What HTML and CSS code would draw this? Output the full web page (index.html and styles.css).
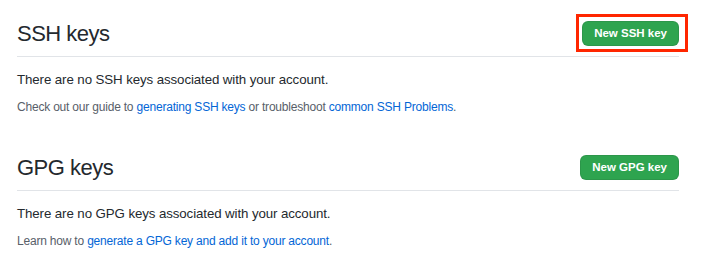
FILE: index.html
```
<!DOCTYPE html>
<html lang="en">
<head>
    <meta charset="UTF-8">
    <meta name="viewport" content="width=device-width, initial-scale=1.0">
    <title>SSH and GPG keys</title>
    <link rel="stylesheet" href="styles.css">
</head>
<body>

    <main class="settings">
        <!-- SSH keys -->
        <section class="key-section">
            <div class="section-head">
                <h2>SSH keys</h2>
                <a href="#" class="btn btn-new highlighted">New SSH key</a>
            </div>
            <p class="empty">There are no SSH keys associated with your account.</p>
            <p class="note">Check out our guide to <a href="#">generating SSH keys</a> or troubleshoot <a href="#">common SSH Problems</a>.</p>
        </section>

        <!-- GPG keys -->
        <section class="key-section">
            <div class="section-head">
                <h2>GPG keys</h2>
                <a href="#" class="btn btn-new">New GPG key</a>
            </div>
            <p class="empty">There are no GPG keys associated with your account.</p>
            <p class="note">Learn how to <a href="#">generate a GPG key and add it to your account</a>.</p>
        </section>
    </main>

</body>
</html>
```

FILE: styles.css
```
body {
    font-family: "Liberation Sans", Arial, sans-serif;
    margin: 0;
    padding: 0;
    background: #ffffff;
    color: #24292e;
}

.settings {
    width: 662px;
    padding: 16px 0 0 17px;
}

.key-section {
    margin-bottom: 34px;
}

.key-section:last-child {
    margin-bottom: 0;
}

/* Heading row */
.section-head {
    display: flex;
    justify-content: space-between;
    align-items: center;
    padding-bottom: 5px;
    border-bottom: 1px solid #e1e4e8;
}

.section-head h2 {
    margin: 0;
    font-size: 22px;
    font-weight: 400;
    line-height: 35px;
    letter-spacing: -0.5px;
}

/* Button */
.btn {
    position: relative;
    display: inline-block;
    font-size: 11.5px;
    font-weight: bold;
    line-height: 23px;
    padding: 0 11px;
    border-radius: 6px;
    text-decoration: none;
}

.btn-new {
    background: #2ea44f;
    color: #ffffff;
    border: 1px solid rgba(27, 31, 35, 0.1);
}

/* red annotation box round the button */
.highlighted::after {
    content: "";
    position: absolute;
    top: -8px;
    left: -7px;
    right: -10px;
    bottom: -7px;
    border: 3px solid #ff2600;
}

/* Texts */
.empty {
    margin: 12px 0 0;
    font-size: 13.3px;
    line-height: 21px;
    letter-spacing: -0.1px;
}

.note {
    margin: 8px 0 0;
    font-size: 12px;
    line-height: 18px;
    letter-spacing: -0.2px;
    color: #586069;
}

.note a {
    color: #0366d6;
    text-decoration: none;
}
```
